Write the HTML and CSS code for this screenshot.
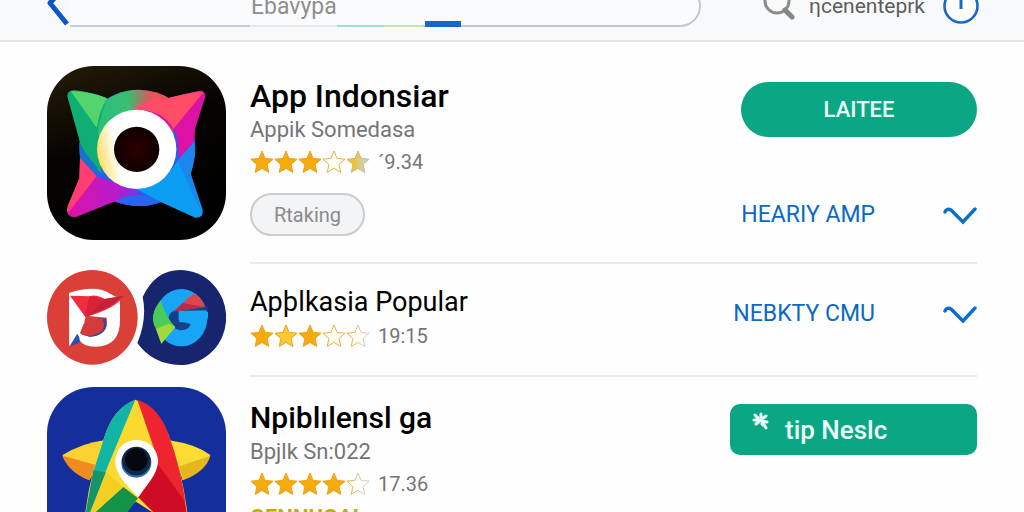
FILE: index.html
```html
<!DOCTYPE html>
<html lang="id">
<head>
    <meta charset="UTF-8">
    <meta name="viewport" content="width=device-width, initial-scale=1.0">
    <title>App Indonsiar</title>
    <link rel="stylesheet" href="styles.css">
</head>
<body>
    <!-- shared shapes -->
    <svg class="defs" aria-hidden="true">
        <defs>
            <linearGradient id="halfGold">
                <stop offset="0.3" stop-color="#f0c030"/>
                <stop offset="0.8" stop-color="#c9d3c6"/>
            </linearGradient>
            <linearGradient id="fadeLine">
                <stop offset="0.1" stop-color="#e9b040"/>
                <stop offset="0.7" stop-color="#cfcfcf"/>
            </linearGradient>
            <symbol id="star" viewBox="0 0 24 24">
                <path d="M12 1l3.1 7.4 8 .8-6 5.3 1.7 7.9-6.8-4-6.8 4 1.7-7.9-6-5.3 8-.8z"/>
            </symbol>
            <symbol id="chevron" viewBox="0 0 34 20">
                <path d="M2 7Q4 3 8 5L20 17 32 4" fill="none" stroke="#0a6fcc" stroke-width="3.4" stroke-linecap="round"/>
            </symbol>
        </defs>
    </svg>

    <header class="topbar">
        <button class="back" type="button" aria-label="Kembali">
            <svg width="24" height="46" viewBox="0 0 24 46"><path d="M21 1L4 20 21 41" fill="none" stroke="#0b57c4" stroke-width="5" stroke-linejoin="round"/></svg>
        </button>
        <div class="search">
            <input type="text" value="Ebavypa" aria-label="Cari">
            <span class="track"></span>
            <span class="tab"></span>
        </div>
        <a class="find" href="#">
            <svg width="32" height="32" viewBox="0 0 32 32"><circle cx="14" cy="11" r="12" fill="none" stroke="#8b8b8b" stroke-width="3"/><path d="M22 20l7 7" stroke="#858585" stroke-width="5" stroke-linecap="round"/></svg>
            <span>ηcenenteprk</span>
        </a>
        <button class="info" type="button" aria-label="Info">
            <svg width="36" height="36" viewBox="0 0 36 36"><circle cx="18" cy="18" r="16.5" fill="#fff" stroke="#1769c8" stroke-width="2.6"/><path d="M18 8v13" stroke="#1769c8" stroke-width="3"/></svg>
        </button>
    </header>

    <main>
        <ul class="apps">
            <li class="app first">
                <svg class="icon" viewBox="33 33 537 522" role="img" aria-label="App Indonsiar">
                    <defs>
                        <linearGradient id="ring" x1="0" y1="0.6" x2="1" y2="0.4">
                            <stop offset="0" stop-color="#ffd95a"/>
                            <stop offset="0.14" stop-color="#fff0b8"/>
                            <stop offset="0.26" stop-color="#fff"/>
                        </linearGradient>
                        <radialGradient id="pupil">
                            <stop offset="0" stop-color="#2c0000"/>
                            <stop offset="1" stop-color="#100000"/>
                        </radialGradient>
                        <linearGradient id="body" x1="0" y1="0" x2="1" y2="0">
                            <stop offset="0.1" stop-color="#2bc07a"/>
                            <stop offset="0.4" stop-color="#39bd70"/>
                            <stop offset="0.7" stop-color="#e8505a"/>
                        </linearGradient>
                        <linearGradient id="night" x1="0" y1="0" x2="0.4" y2="1">
                            <stop offset="0" stop-color="#261c08"/>
                            <stop offset="0.5" stop-color="#050402"/>
                            <stop offset="1" stop-color="#000"/>
                        </linearGradient>
                        <linearGradient id="violet" x1="0" y1="0" x2="1" y2="0">
                            <stop offset="0" stop-color="#dc12a6"/>
                            <stop offset="0.6" stop-color="#b81ccb"/>
                            <stop offset="1" stop-color="#5544ee"/>
                        </linearGradient>
                    </defs>
                    <rect x="33" y="33" width="537" height="522" rx="140" fill="url(#night)"/>
                    <circle cx="304" cy="279" r="174" fill="#2460e6"/>
                    <path d="M180 158Q240 103 310 104 370 108 400 130L420 300 190 300z" fill="url(#body)"/>
                    <path d="M94 124Q94 104 118 106 170 112 212 130L186 220 196 355Q150 320 134 270z" fill="#0fae73"/>
                    <path d="M104 108Q170 110 214 130 192 160 182 218z" fill="#55d46e"/>
                    <path d="M130 262Q150 300 182 336L196 368 132 312z" fill="#1672cf"/>
                    <path d="M508 124Q508 104 486 108L394 130Q340 130 318 165L420 230 430 310 474 260 478 220z" fill="#dc12a6"/>
                    <path d="M502 112Q490 105 394 130 340 120 290 165 380 160 412 222z" fill="#ff4d68"/>
                    <path d="M132 310L182 365 300 402 340 452Q290 456 234 440L120 486Q92 488 94 464L130 370z" fill="url(#violet)"/>
                    <path d="M132 308L182 364 96 474Q90 466 96 450L130 370z" fill="#ff3d73"/>
                    <path d="M424 318Q450 290 474 262 480 310 464 356L500 464Q504 488 478 488L376 442 300 402Q380 396 424 318z" fill="#0b9df2"/>
                    <path d="M424 318L498 474 464 356Q482 300 474 262z" fill="#1c86ee"/>
                    <path d="M240 438Q300 400 376 442 310 466 240 438z" fill="#2766f0"/>
                    <circle cx="302" cy="283" r="119" fill="url(#ring)"/>
                    <circle cx="302" cy="283" r="68" fill="url(#pupil)"/>
                </svg>
                <div class="content">
                    <div class="details">
                        <h2>App Indonsiar</h2>
                        <p class="dev">Appik Somedasa</p>
                        <p class="rating">
                            <svg class="star"><use href="#star"/></svg><svg class="star"><use href="#star"/></svg><svg class="star"><use href="#star"/></svg><svg class="star empty"><use href="#star"/></svg><svg class="star half"><use href="#star"/></svg>
                            <span>´9.34</span>
                        </p>
                        <button class="tag" type="button">Rtaking</button>
                    </div>
                    <div class="actions">
                        <button class="install" type="button">LAITEE</button>
                        <a class="more" href="#">HEARIY AMP <svg width="34" height="20"><use href="#chevron"/></svg></a>
                    </div>
                </div>
            </li>

            <li class="app second">
                <svg class="icon" viewBox="33 43 537 285" role="img" aria-label="Aplikasi Popular">
                    <path d="M320 124Q358 43 432 43A138 142 0 0 1 432 328Q350 326 304 262 334 190 320 124z" fill="#16256e"/>
                    <ellipse cx="169" cy="185" rx="136" ry="142" fill="#db4038"/>
                    <path d="M99 112Q180 86 222 114L252 130V190Q254 272 178 273 140 272 130 252L100 271z" fill="#fff"/>
                    <path d="M150 180L212 186Q220 240 160 242 140 240 132 232 144 206 150 180z" fill="#d53b3b"/>
                    <path d="M154 190L190 192Q206 196 184 204H142z" fill="#fff"/>
                    <path d="M162 244Q206 240 212 208L208 188 180 190Q198 196 192 212 184 232 134 234z" fill="#394a9a"/>
                    <path d="M162 240Q204 234 204 206L200 190 150 190 134 232Q144 240 162 240z" fill="#d53b3b"/>
                    <path d="M99 116L146 182Q142 220 101 264z" fill="#fff"/>
                    <path d="M102 120L160 122Q180 114 206 130L264 120Q240 158 148 184z" fill="#f12c3d"/>
                    <path d="M206 130L264 120 220 154 148 184z" fill="#c91f38"/>
                    <path d="M160 122L206 130 172 160 146 182z" fill="#d92238"/>
                    <path d="M124 234Q134 248 130 262L101 271z" fill="#2452b4"/>
                    <ellipse cx="436" cy="186" rx="78" ry="86" fill="#17a5f5"/>
                    <path d="M502 152L436 158Q396 166 398 190 408 220 432 224 458 224 464 206L428 194V166L515 164V150z" fill="#153f86"/>
                    <path d="M430 168H516Q518 184 512 200H430z" fill="#17a5f5"/>
                    <path d="M474 114Q500 126 506 154L430 166Q438 134 474 114z" fill="#dd4650"/>
                    <path d="M506 154L412 168 440 142z" fill="#b92c45"/>
                    <path d="M374 134Q336 180 360 220L376 264 418 214Q392 190 374 134z" fill="#4acb58"/>
                    <path d="M360 220L376 264 418 214 398 204z" fill="#a2d83c"/>
                </svg>
                <div class="content">
                    <div class="details">
                        <h2>Apþlkasia Popular</h2>
                        <p class="rating">
                            <svg class="star"><use href="#star"/></svg><svg class="star light"><use href="#star"/></svg><svg class="star"><use href="#star"/></svg><svg class="star empty"><use href="#star"/></svg><svg class="star faded"><use href="#star"/></svg>
                            <span>19:15</span>
                        </p>
                    </div>
                    <div class="actions">
                        <a class="more" href="#">NEBKTY CMU <svg width="34" height="20"><use href="#chevron"/></svg></a>
                    </div>
                </div>
            </li>

            <li class="app third">
                <svg class="icon" viewBox="33 36 537 522" role="img" aria-label="Bintang">
                    <rect x="33" y="36" width="537" height="522" rx="140" fill="#142f9c"/>
                    <path d="M80 240Q140 204 204 196L184 274 160 316Q100 290 80 244z" fill="#fbd22f"/>
                    <path d="M80 242L180 270 160 316Q96 290 80 242z" fill="#ef8c1f"/>
                    <path d="M400 196Q480 208 523 240 510 280 440 316z" fill="#fbdc35"/>
                    <path d="M523 242L430 274 440 316Q510 290 523 242z" fill="#e5b71f"/>
                    <path d="M298 74Q230 100 204 190 160 300 146 430L160 470 300 380 440 470 456 430Q440 290 398 180 366 96 298 74z" fill="#fcd92f"/>
                    <path d="M298 74Q230 100 204 190L172 290 208 292z" fill="#12b5a5"/>
                    <path d="M172 286L210 292 156 430 146 430z" fill="#159567"/>
                    <path d="M304 74Q370 96 398 180 440 290 454 430L376 420 306 366 366 256z" fill="#ee2430"/>
                    <path d="M366 268L444 376 454 430H370L306 366z" fill="#cf0c26"/>
                    <path d="M262 336L306 370 260 430H158z" fill="#129347"/>
                    <path d="M210 292L262 336 158 424z" fill="#f3cf24"/>
                    <path d="M302 195C340 195 366 224 366 260 364 300 330 330 308 366 280 340 238 300 238 260 238 224 264 195 302 195z" fill="#fff"/>
                    <circle cx="301" cy="263" r="45" fill="#2b6fa5"/>
                    <circle cx="301" cy="258" r="43" fill="#11284b"/>
                    <circle cx="301" cy="254" r="34" fill="#05080f"/>
                </svg>
                <div class="content">
                    <div class="details">
                        <h2>Npiblılensl ga</h2>
                        <p class="dev">Bpjlk Sn:022</p>
                        <p class="rating">
                            <svg class="star"><use href="#star"/></svg><svg class="star"><use href="#star"/></svg><svg class="star"><use href="#star"/></svg><svg class="star"><use href="#star"/></svg><svg class="star faded blank"><use href="#star"/></svg>
                            <span>17.36</span>
                        </p>
                        <p class="note">GENNUGAL</p>
                    </div>
                    <div class="actions">
                        <button class="install square" type="button">
                            <svg width="18" height="18" viewBox="0 0 18 18"><path d="M3 3l3 3M2 8h4M9 2v6l5-4M8 9l-4 3M10 9l5 1M11 11l3 5M10 12l1 1" fill="none" stroke="#e8fff8" stroke-width="3" stroke-linecap="round"/></svg>
                            tip Neslc
                        </button>
                    </div>
                </div>
            </li>
        </ul>
    </main>
</body>
</html>
```
FILE: styles.css
```css
* {
    box-sizing: border-box;
}
body {
    margin: 0;
    height: 100vh;
    overflow: hidden;
    background-color: #fefefe;
    font-family: Roboto, "Liberation Sans", sans-serif;
    color: #000;
}
button {
    font-family: inherit;
    cursor: pointer;
}
a {
    text-decoration: none;
}
h2, p {
    margin: 0;
}
.defs {
    position: absolute;
    width: 0;
    height: 0;
}

/* top bar, scrolled partly out of view */
.topbar {
    display: flex;
    align-items: center;
    margin-top: -15px;
    padding: 0 45px 13px 46px;
    border-bottom: 2px solid #e4e5e6;
    background-color: #f8f9fa;
}
.back, .info {
    display: flex;
    padding: 0;
    border: none;
    background: none;
}
.back {
    height: 42px;
    align-items: center;
}
.search {
    position: relative;
    flex: 1;
    height: 42px;
    margin-right: 62px;
    border: 2px solid #c4c6c9;
    border-left: none;
    border-radius: 0 24px 24px 0;
    background-color: #fafbfc;
}
.search input {
    width: 100%;
    height: 38px;
    padding: 0 24px 0 181px;
    border: none;
    background: none;
    font-family: inherit;
    font-size: 23px;
    color: #8f8f8f;
}
.track {
    position: absolute;
    left: 0;
    bottom: -2px;
    width: 353px;
    height: 2px;
    background: linear-gradient(to right, #c3cce4 180px, #e6e8ec 180px, #e6e8ec 267px, #a5ddd0 267px, #a5ddd0 314px, #c8e5ac 314px);
}
.tab {
    position: absolute;
    left: 355px;
    bottom: -2px;
    width: 36px;
    height: 6px;
    background-color: #1565cb;
}
.find {
    display: flex;
    align-items: center;
    gap: 14px;
    margin-right: 18px;
    font-size: 21px;
    color: #5c5c5c;
}

/* app list */
.apps {
    margin: 0;
    padding: 0 47px;
    list-style: none;
}
.app {
    display: flex;
    align-items: flex-start;
    gap: 24px;
}
.icon {
    flex: none;
    width: 179px;
}
.content {
    flex: 1;
    display: flex;
    justify-content: space-between;
    border-bottom: 2px solid #e9eaeb;
}
.first .icon {
    margin-top: 24px;
}
.first .content {
    padding: 36px 0 26px;
}
.second .icon {
    margin-top: 6px;
}
.second .content {
    padding: 20px 0 23px;
}
.third .icon {
    margin-top: 10px;
}
.third .content {
    padding: 23px 0 24px;
}
h2 {
    font-size: 32px;
    line-height: 36px;
    font-weight: 500;
}
.second h2 {
    font-size: 27px;
    font-weight: 400;
}
.third h2 {
    font-size: 30px;
}
.dev {
    font-size: 22px;
    line-height: 32px;
    color: #757575;
}
.rating {
    display: flex;
    align-items: center;
    height: 32px;
    font-size: 20px;
    color: #757575;
}
.rating span {
    margin-left: 8px;
}
.star {
    width: 24px;
    height: 24px;
    fill: #f5ab0c;
    stroke: #eaa21c;
    stroke-width: 1;
}
.star.light {
    fill: #fcc934;
}
.star.empty {
    fill: #fffdf0;
    stroke: #e6b04a;
}
.star.half {
    fill: url(#halfGold);
    stroke: #c5bd8a;
}
.star.faded {
    fill: #fffdf2;
    stroke: url(#fadeLine);
}
.star.blank {
    fill: #fff;
}
.note {
    margin-top: 2px;
    font-size: 22px;
    line-height: 32px;
    font-weight: 700;
    color: #c9a80c;
}
.tag {
    display: block;
    height: 43px;
    margin-top: 15px;
    padding: 0 22px;
    border: 2px solid #cbcccd;
    border-radius: 22px;
    background-color: #f3f4f5;
    font-size: 20px;
    color: #8a8a8a;
}
.actions {
    display: flex;
    flex-direction: column;
    align-items: flex-end;
    padding-top: 4px;
}
.install {
    width: 236px;
    height: 55px;
    border: none;
    border-radius: 28px;
    background-color: #0ba683;
    font-size: 22px;
    font-weight: 500;
    color: #eafff9;
}
.install.square {
    display: flex;
    align-items: center;
    gap: 15px;
    width: 247px;
    height: 51px;
    padding: 0 22px;
    border-radius: 10px;
    font-size: 26px;
}
.install.square svg {
    margin-bottom: 18px;
}
.more {
    display: flex;
    align-items: center;
    gap: 68px;
    font-size: 23px;
    line-height: 36px;
    color: #0a69c4;
}
.first .more {
    margin-top: 60px;
}
.second .more {
    margin-top: 8px;
}
```
